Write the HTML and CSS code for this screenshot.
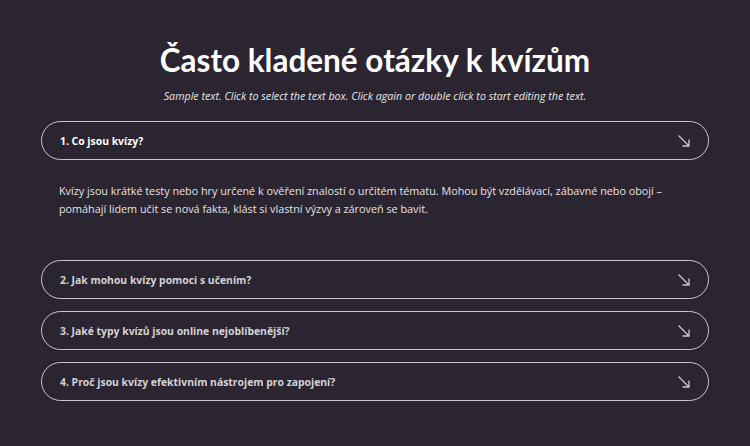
FILE: index.html
```html
<!DOCTYPE html>
<html lang="cs">
  <head>
    <meta charset="UTF-8" />
    <meta name="viewport" content="width=device-width, initial-scale=1.0" />
    <title>Často kladené otázky k kvízům</title>
    <link rel="stylesheet" href="styles.css">
  </head>
  <body>
    <section class="faq">
      <h1>Často kladené otázky k kvízům</h1>
      <p class="lead">Sample text. Click to select the text box. Click again or double click to start editing the text.</p>

      <div class="item open">
        <div class="question">
          <span>1. Co jsou kvízy?</span>
          <svg class="arrow" viewBox="0 0 16 16" width="16" height="16"><path d="M2.5 2.5 L13 13 M13 6.5 V13 H6.5" /></svg>
        </div>
      </div>
      <div class="answer">
        Kvízy jsou krátké testy nebo hry určené k ověření znalostí o určitém tématu. Mohou být vzdělávací, zábavné nebo obojí – pomáhají lidem učit se nová fakta, klást si vlastní výzvy a zároveň se bavit.
      </div>

      <div class="item">
        <div class="question">
          <span>2. Jak mohou kvízy pomoci s učením?</span>
          <svg class="arrow" viewBox="0 0 16 16" width="16" height="16"><path d="M2.5 2.5 L13 13 M13 6.5 V13 H6.5" /></svg>
        </div>
      </div>
      <div class="item">
        <div class="question">
          <span>3. Jaké typy kvízů jsou online nejoblíbenější?</span>
          <svg class="arrow" viewBox="0 0 16 16" width="16" height="16"><path d="M2.5 2.5 L13 13 M13 6.5 V13 H6.5" /></svg>
        </div>
      </div>
      <div class="item">
        <div class="question">
          <span>4. Proč jsou kvízy efektivním nástrojem pro zapojení?</span>
          <svg class="arrow" viewBox="0 0 16 16" width="16" height="16"><path d="M2.5 2.5 L13 13 M13 6.5 V13 H6.5" /></svg>
        </div>
      </div>
    </section>
  </body>
</html>
```

FILE: styles.css
```css
body {
  margin: 0;
  background-color: #2a2530;
  color: #fff;
  font-family: "Open Sans", Arial, sans-serif;
}

.faq {
  width: 668px;
  margin: 0 auto;
  padding-top: 38px;
}

h1 {
  margin: 0;
  text-align: center;
  font-family: Lato, "Open Sans", sans-serif;
  font-size: 31.5px;
  font-weight: 700;
  line-height: 44px;
}

.lead {
  margin: 6px 0 17px;
  text-align: center;
  font-size: 10.7px;
  font-style: italic;
  line-height: 16px;
  color: #e6e6e6;
}

.item {
  border: 1px solid #c9c6cc;
  border-radius: 20px;
  margin-bottom: 12px;
}

.question {
  display: flex;
  align-items: center;
  justify-content: space-between;
  height: 37px;
  padding: 0 16px 0 18px;
  font-size: 10.4px;
  font-weight: 700;
  color: #d4d2d6;
}

.open .question {
  color: #fff;
}

.arrow {
  fill: none;
  stroke: #c9c6cc;
  stroke-width: 1.3;
}

.answer {
  padding: 10px 18px 42px;
  font-size: 10.8px;
  line-height: 18px;
  color: #e4e2e6;
}
```
